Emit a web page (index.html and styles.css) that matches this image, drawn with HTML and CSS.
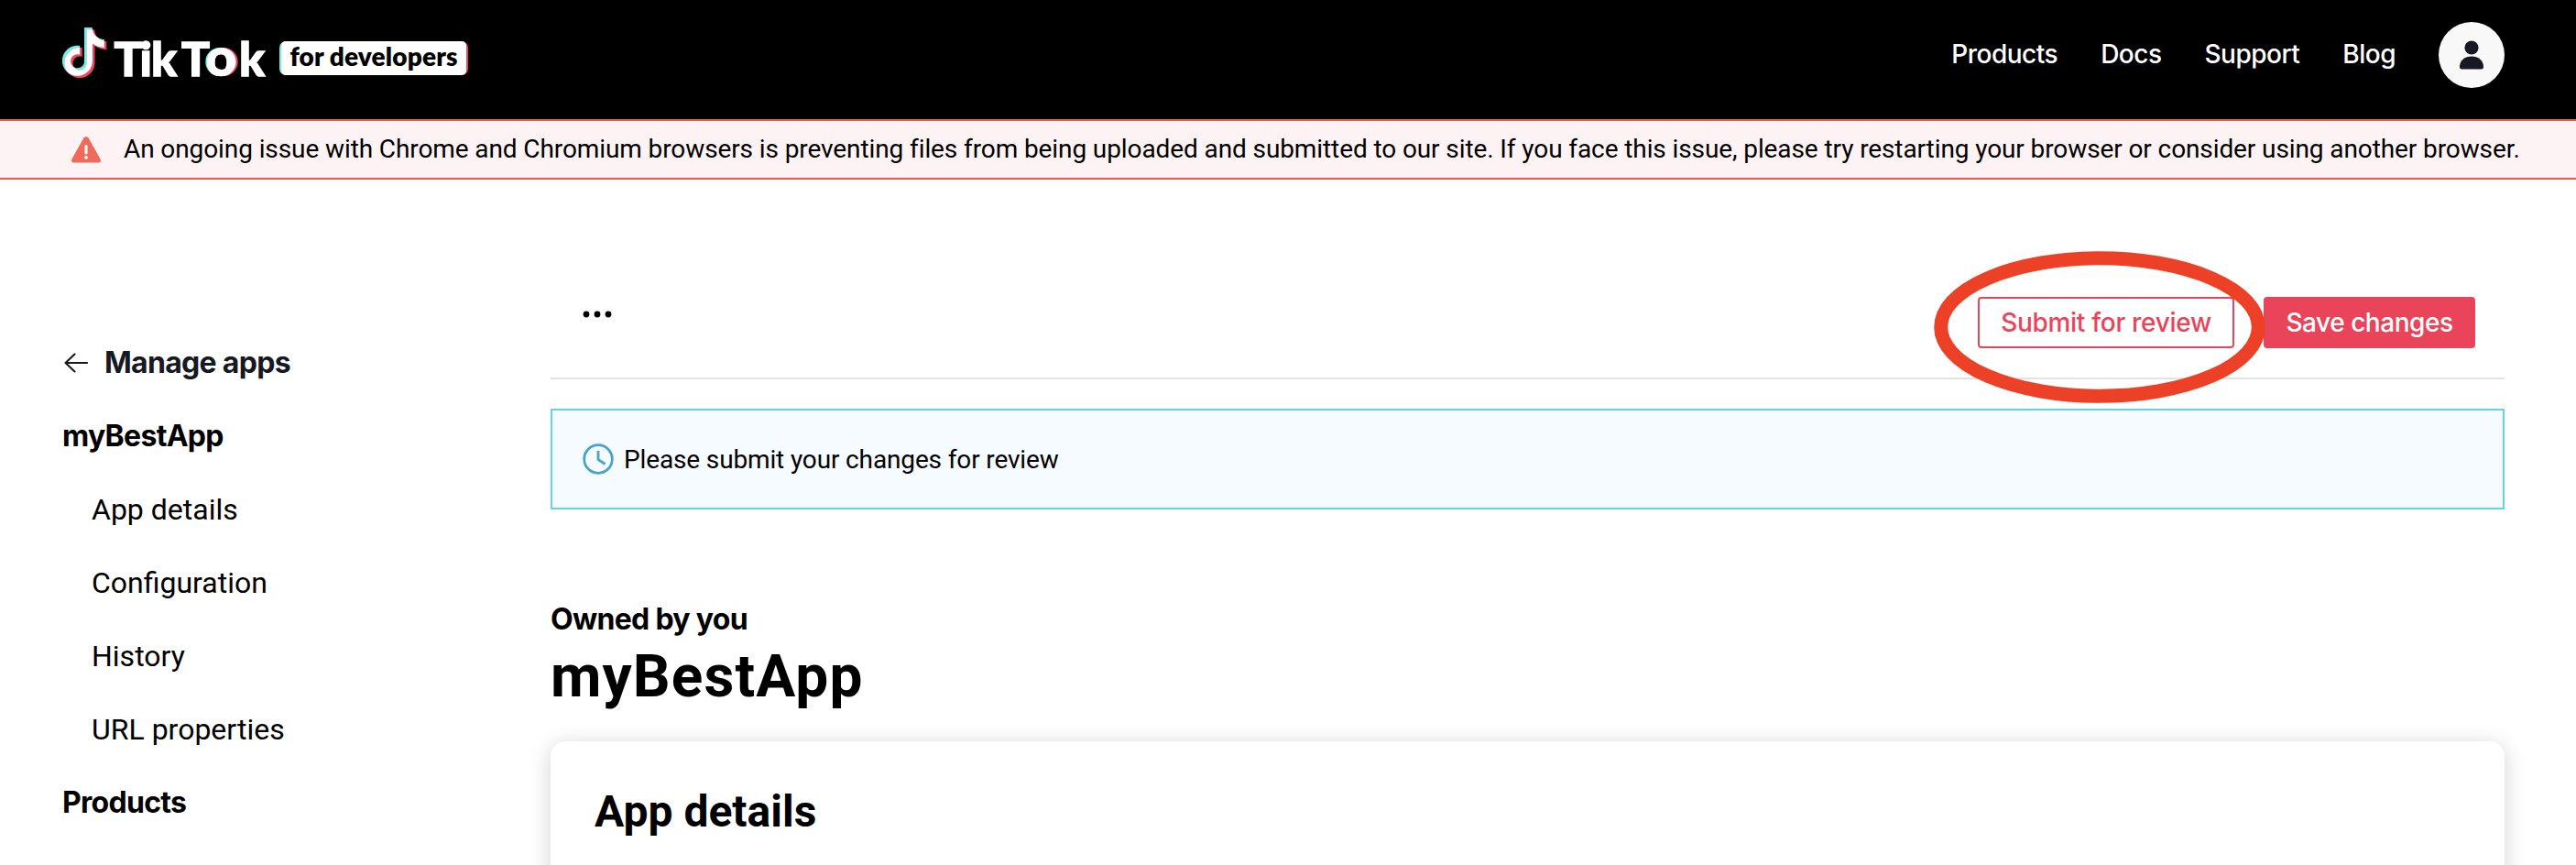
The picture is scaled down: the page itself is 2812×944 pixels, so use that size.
FILE: index.html
```
<!DOCTYPE html>
<html lang="en">
<head>
<meta charset="utf-8">
<title>TikTok for Developers</title>
<link rel="stylesheet" href="styles.css">
</head>
<body>
<header class="header">
  <a class="brand">
    <svg class="brand-logo" width="228" height="58" viewBox="68 29 228 58">
      <defs>
        <path id="note" d="M12.525.02c1.31-.02 2.61-.01 3.91-.02.08 1.53.63 3.09 1.75 4.17 1.12 1.11 2.7 1.62 4.24 1.79v4.03c-1.44-.05-2.89-.35-4.2-.97-.57-.26-1.1-.59-1.62-.93-.01 2.92.01 5.84-.02 8.75-.08 1.4-.54 2.79-1.35 3.94-1.31 1.92-3.58 3.17-5.91 3.21-1.43.08-2.86-.31-4.08-1.03-2.02-1.19-3.44-3.37-3.65-5.71-.02-.5-.03-1-.01-1.49.18-1.9 1.12-3.72 2.58-4.96 1.66-1.44 3.98-2.13 6.15-1.72.02 1.48-.04 2.96-.04 4.44-.99-.32-2.15-.23-3.02.37-.63.41-1.11 1.04-1.36 1.75-.21.51-.15 1.07-.14 1.61.24 1.64 1.82 3.02 3.5 2.87 1.12-.01 2.19-.66 2.77-1.61.19-.33.4-.67.41-1.06.1-1.79.06-3.57.07-5.36.01-4.03-.01-8.05.02-12.07z"/>
        <clipPath id="note-clip"><use href="#note" transform="translate(67,32.2) scale(2.2)"/></clipPath>
      </defs>
      <use href="#note" fill="#6df0ea" transform="translate(64.5,30) scale(2.2)"/>
      <use href="#note" fill="#ee4560" transform="translate(67,32.2) scale(2.2)"/>
      <g clip-path="url(#note-clip)"><use href="#note" fill="#fff" transform="translate(64.5,30) scale(2.2)"/></g>
      <circle cx="239.800" cy="67.500" r="12" fill="none" stroke="#6df0ea" stroke-width="7"/>
      <circle cx="244.200" cy="67.500" r="12" fill="none" stroke="#ee4560" stroke-width="7"/>
      <circle cx="242" cy="67.500" r="12" stroke="#fff" stroke-width="7"/>
      <text class="wordmark" y="82.500"><tspan x="124.500 152.500 165">Tik</tspan><tspan x="198">T</tspan><tspan class="wordmark-o" x="224.500">o</tspan><tspan x="261">k</tspan></text>
    </svg>
    <span class="badge"><span class="badge-text">for developers</span></span>
  </a>
  <nav class="nav">
    <a>Products</a><a>Docs</a><a>Support</a><a>Blog</a>
    <span class="avatar">
      <svg width="26" height="32" viewBox="0 0 26 32"><circle cx="13" cy="8" r="7.6"/><path d="M0 29C0 22 5.500 17.500 13 17.500S26 22 26 29Q26 31.500 23.500 31.500H2.500Q0 31.500 0 29Z"/></svg>
    </span>
  </nav>
</header>
<div class="banner">
  <svg width="32" height="29" viewBox="0 0 32 29"><path d="M13.400 1.500Q16-1.500 18.600 1.500L31.500 24.500Q33 28.500 29 28.500H3Q-1 28.500.500 24.500Z" fill="#ef6a5a"/><path d="M16 10.500V18" stroke="#fff" stroke-width="3" stroke-linecap="round"/><circle cx="16" cy="22.800" r="1.900" fill="#fff"/></svg>
  <p>An ongoing issue with Chrome and Chromium browsers is preventing files from being uploaded and submitted to our site. If you face this issue, please try restarting your browser or consider using another browser.</p>
</div>
<div class="page">
  <aside class="sidebar">
    <a class="back"><svg width="26" height="22" viewBox="0 0 26 22"><path d="M11.500 1.500 1.500 11 11.500 20.500M2 11H25" fill="none" stroke="#161823" stroke-width="2.100" stroke-linecap="round" stroke-linejoin="round"/></svg>Manage apps</a>
    <div class="group">myBestApp</div>
    <a class="item">App details</a>
    <a class="item">Configuration</a>
    <a class="item">History</a>
    <a class="item">URL properties</a>
    <div class="group">Products</div>
    <a class="item item-tight">Login Kit</a>
  </aside>
  <main class="main">
    <div class="toolbar">
      <svg class="more" width="32" height="8" viewBox="0 0 32 8"><circle cx="4" cy="4" r="3.400"/><circle cx="16" cy="4" r="3.400"/><circle cx="28" cy="4" r="3.400"/></svg>
      <button class="btn btn-outline">Submit for review</button>
      <button class="btn btn-primary">Save changes</button>
      <svg class="marker" width="364" height="168" viewBox="0 0 364 168"><ellipse cx="182" cy="84" rx="173.300" ry="75.300" fill="none" stroke="#ec4127" stroke-width="15"/></svg>
    </div>
    <div class="notice">
      <svg width="34" height="34" viewBox="0 0 34 34" fill="none" stroke="#47a3c9" stroke-width="2.800"><circle cx="17" cy="17" r="15.300"/><path d="M17 8V17.500L24.500 22.500"/></svg>
      <span>Please submit your changes for review</span>
    </div>
    <div class="owner">Owned by you</div>
    <h1 class="title">myBestApp</h1>
    <section class="card"><h2>App details</h2></section>
  </main>
</div>
</body>
</html>
```
FILE: styles.css
```
* { box-sizing: border-box; }
body { margin: 0; height: 944px; overflow: hidden; background: #fff; color: #000; font-family: Roboto, "Liberation Sans", sans-serif; }
p, h1, h2 { margin: 0; }
.header { height: 130px; padding: 24px 78px 0 68px; background: #000; display: flex; justify-content: space-between; align-items: flex-start; }
.brand { display: flex; align-items: flex-start; gap: 9px; padding-top: 5px; }
.brand-logo { display: block; }
.wordmark { font: 900 51.5px Lato, sans-serif; fill: #fff; stroke: #fff; stroke-width: 1.4; }
.wordmark-o { font-size: 57px; stroke-width: 0.5; }
.badge { margin-top: 16px; width: 206px; height: 37px; padding: 0 2px; border-radius: 7px; background: linear-gradient(90deg, #6df0ea, #6df0ea 45%, #ee4560 55%, #ee4560); display: flex; }
.badge-text { flex: 1; border-radius: 5px; background: #fff; color: #000; text-align: center; font: 800 28px/33px Lato, sans-serif; letter-spacing: 0.15px; white-space: nowrap; }
.nav { display: flex; align-items: center; height: 72px; gap: 47px; color: #fff; font: 500 28px/40px Inter, sans-serif; letter-spacing: -0.5px; }
.nav a { padding-bottom: 2px; }
.avatar { width: 72px; height: 72px; border-radius: 50%; background: #f8f8f8; display: flex; align-items: center; justify-content: center; fill: #161823; }
.banner { height: 66px; padding-left: 78px; display: flex; align-items: center; gap: 25px; background: #fdf3f4; border-top: 2px solid #eb5a46; border-bottom: 2px solid #eb5a46; font-size: 28px; line-height: 40px; letter-spacing: -0.1px; white-space: nowrap; }
.page { display: flex; height: 748px; overflow: hidden; }
.sidebar { width: 601px; flex: none; padding: 160px 0 0 68px; font-size: 32px; line-height: 80px; }
.sidebar > * { display: block; height: 80px; }
.sidebar .back { display: flex; align-items: center; gap: 18px; padding-left: 2px; color: #161823; }
.back, .group, .owner { font-family: Inter, sans-serif; font-weight: 700; letter-spacing: -0.7px; }
.sidebar .item { padding-left: 32px; }
.sidebar .item-tight { line-height: 78px; }
.main { width: 2133px; padding-top: 96px; }
.toolbar { position: relative; height: 122px; padding: 32px 32px 0 35px; border-bottom: 2px solid #e3e3e3; display: flex; align-items: flex-start; }
.more { margin: 15px auto 0 0; }
.btn { height: 56px; border: 2px solid #ea445a; border-radius: 4px; padding: 0; font: 500 28px/48px Inter, sans-serif; letter-spacing: -0.3px; }
.btn-outline { width: 280px; margin-right: 32px; background: #fff; color: #ea445a; }
.btn-primary { width: 231px; background: #ea445a; color: #fff; letter-spacing: -0.45px; }
.marker { position: absolute; left: 1509px; top: -19px; }
.notice { margin-top: 32px; height: 110px; padding-left: 33px; border: 2px solid #62d3e8; background: #f5fbfe; display: flex; align-items: center; gap: 11px; font-size: 28px; letter-spacing: -0.14px; }
.owner { margin-top: 100px; font-size: 32px; line-height: 40px; }
.title { margin-top: 7px; font-size: 64px; line-height: 72px; letter-spacing: 1.1px; }
.card { margin-top: 34px; height: 300px; padding: 45px 48px; border-radius: 16px; background: #fff; box-shadow: 0 4px 24px rgba(0, 0, 0, 0.18); }
.card h2 { font-size: 48px; line-height: 64px; }
```
